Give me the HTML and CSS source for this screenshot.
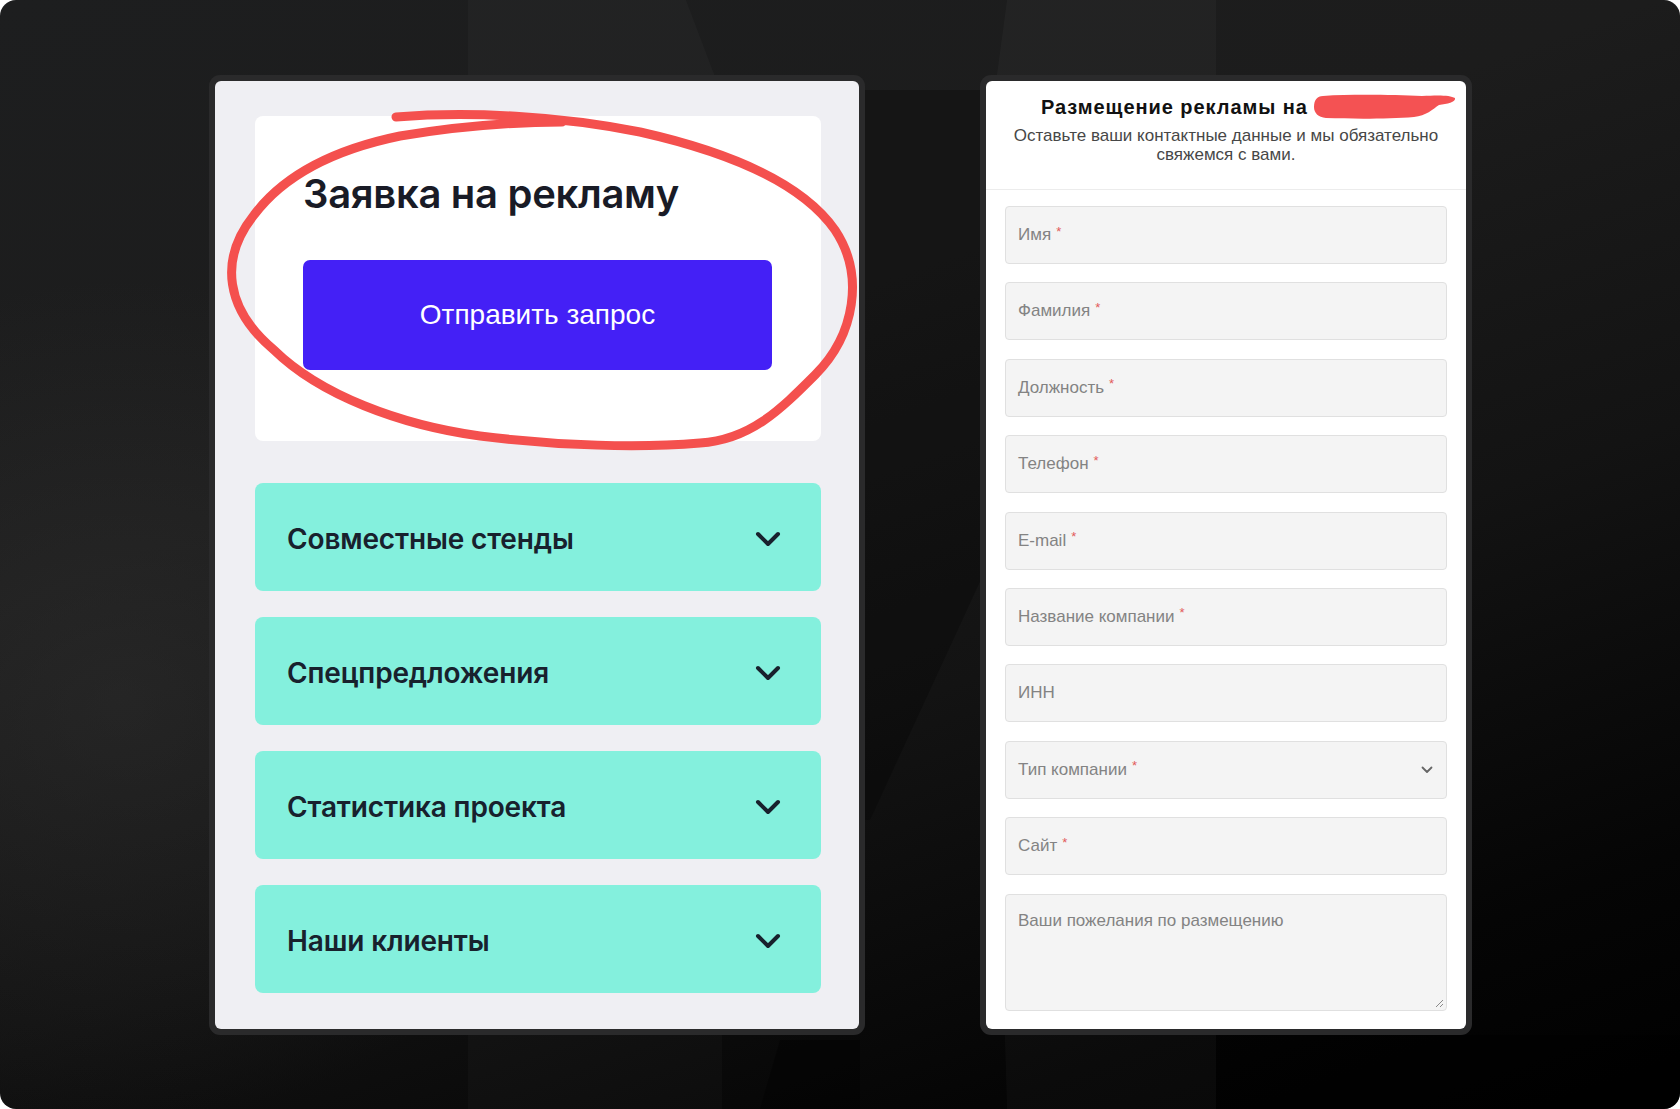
FILE: index.html
```html
<!DOCTYPE html>
<html lang="ru">
<head>
<meta charset="utf-8">
<title>Заявка на рекламу</title>
<link rel="stylesheet" href="styles.css">
</head>
<body>
<div class="screen">
  <svg class="bg-deco" width="1680" height="1109" viewBox="0 0 1680 1109" aria-hidden="true">
    <polygon points="468,0 686,0 722,95 722,1109 468,1109" fill="rgba(255,255,255,0.022)"/>
    <polygon points="1007,0 1216,0 1216,1109 1007,1109 980,200" fill="rgba(255,255,255,0.028)"/>
    <polygon points="860,90 990,90 990,560 870,820 860,820" fill="rgba(0,0,0,0.25)"/>
    <polygon points="780,1040 860,1040 860,1109 760,1109" fill="rgba(0,0,0,0.35)"/>
    <rect x="1216" y="1035" width="464" height="74" fill="rgba(0,0,0,0.4)"/>
  </svg>

  <div class="stage">
    <div class="frame">
      <div class="panel-left">
        <div class="cta-card">
          <h1 class="cta-title">Заявка на рекламу</h1>
          <button class="cta-btn" type="button">Отправить запрос</button>
        </div>
        <div class="acc-list">
          <div class="acc">
            <span class="acc-label">Совместные стенды</span>
            <svg class="acc-chev" width="26" height="16" viewBox="0 0 26 16"><path d="M3 3 L13 13 L23 3"/></svg>
          </div>
          <div class="acc">
            <span class="acc-label">Спецпредложения</span>
            <svg class="acc-chev" width="26" height="16" viewBox="0 0 26 16"><path d="M3 3 L13 13 L23 3"/></svg>
          </div>
          <div class="acc">
            <span class="acc-label">Статистика проекта</span>
            <svg class="acc-chev" width="26" height="16" viewBox="0 0 26 16"><path d="M3 3 L13 13 L23 3"/></svg>
          </div>
          <div class="acc">
            <span class="acc-label">Наши клиенты</span>
            <svg class="acc-chev" width="26" height="16" viewBox="0 0 26 16"><path d="M3 3 L13 13 L23 3"/></svg>
          </div>
        </div>
      </div>
    </div>

    <div class="frame">
      <div class="panel-right">
        <div class="form-head">
          <div class="form-title">Размещение рекламы на <span class="redact"><svg width="142" height="26" viewBox="0 0 142 26"><path d="M9 2 C40 0 80 1 108 2 C124 1 136 1 141 4 C142 8 133 10 125 11 C119 15 112 22 100 23 C75 25 40 25 12 24 C4 23 0 19 0 13 C0 6 3 2 9 2 Z" fill="#f45253"/></svg></span></div>
          <p class="form-sub">Оставьте ваши контактные данные и мы обязательно свяжемся с вами.</p>
        </div>
        <div class="form-body">
          <div class="field"><span class="ph">Имя</span><span class="req">*</span></div>
          <div class="field"><span class="ph">Фамилия</span><span class="req">*</span></div>
          <div class="field"><span class="ph">Должность</span><span class="req">*</span></div>
          <div class="field"><span class="ph">Телефон</span><span class="req">*</span></div>
          <div class="field"><span class="ph">E-mail</span><span class="req">*</span></div>
          <div class="field"><span class="ph">Название компании</span><span class="req">*</span></div>
          <div class="field"><span class="ph">ИНН</span></div>
          <div class="field field-select"><span class="ph">Тип компании</span><span class="req">*</span>
            <svg class="sel-chev" width="12" height="8" viewBox="0 0 12 8"><path d="M1.5 1.5 L6 6 L10.5 1.5"/></svg>
          </div>
          <div class="field"><span class="ph">Сайт</span><span class="req">*</span></div>
          <div class="field field-area"><span class="ph">Ваши пожелания по размещению</span>
            <svg class="grip" width="10" height="10" viewBox="0 0 10 10"><path d="M9 2 L2 9 M9 6 L6 9"/></svg>
          </div>
        </div>
      </div>
    </div>
  </div>

  <svg class="scribble" width="1680" height="1109" viewBox="0 0 1680 1109" aria-hidden="true">
    <path d="M396 117 C470 111 560 116 640 132 C720 150 800 180 835 230 C865 275 855 335 815 375 C780 410 750 440 700 443 C640 448 560 446 480 436 C400 425 320 395 274 350 C226 310 218 260 254 215 C284 175 332 150 400 136 C460 126 520 122 562 122"/>
  </svg>
</div>
</body>
</html>
```

FILE: styles.css
```css
* { box-sizing: border-box; }

html, body {
  margin: 0;
  padding: 0;
  background: #ffffff;
}

.screen {
  position: relative;
  width: 1680px;
  height: 1109px;
  border-radius: 16px;
  overflow: hidden;
  background:
    radial-gradient(ellipse 700px 600px at 120px 700px, rgba(60,60,60,0.35), rgba(0,0,0,0) 70%),
    linear-gradient(160deg, #1d1e1f 0%, #1c1c1c 35%, #131313 60%, #050505 85%, #000000 100%);
}

.bg-deco {
  position: absolute;
  left: 0;
  top: 0;
}

.stage {
  position: relative;
  z-index: 1;
  display: flex;
  align-items: flex-start;
  gap: 115px;
  padding: 75px 0 0 209px;
}

.frame {
  padding: 6px;
  background: #2a2a2b;
  border-radius: 11px;
}

/* ---------- left panel ---------- */
.panel-left {
  width: 644px;
  height: 948px;
  background: #efeff3;
  border-radius: 6px;
  padding: 35px 38px 0 40px;
}

.cta-card {
  height: 325px;
  background: #ffffff;
  border-radius: 8px;
  padding: 54px 0 0 48px;
}

.cta-title {
  margin: 0;
  font-family: "Inter", "Noto Sans", sans-serif;
  font-weight: 600;
  font-size: 40px;
  line-height: 48px;
  letter-spacing: -0.3px;
  color: #191b26;
}

.cta-btn {
  display: block;
  margin-top: 42px;
  width: 469px;
  height: 110px;
  border: none;
  border-radius: 7px;
  background: #4420f6;
  color: #ffffff;
  font-family: "Liberation Sans", Arial, sans-serif;
  font-size: 28px;
  font-weight: 400;
}

.acc-list {
  margin-top: 42px;
  display: flex;
  flex-direction: column;
  gap: 26px;
}

.acc {
  height: 108px;
  background: #84f0dd;
  border-radius: 8px;
  display: flex;
  align-items: center;
  justify-content: space-between;
  padding: 4px 40px 0 32px;
}

.acc-label {
  font-family: "Inter", "Noto Sans", sans-serif;
  font-weight: 600;
  font-size: 28px;
  color: #18212d;
  letter-spacing: -0.15px;
}

.acc-chev path {
  fill: none;
  stroke: #18212d;
  stroke-width: 4;
  stroke-linecap: round;
  stroke-linejoin: round;
}

/* ---------- right panel ---------- */
.panel-right {
  width: 480px;
  height: 948px;
  background: #ffffff;
  border-radius: 6px;
  font-family: "Liberation Sans", Arial, sans-serif;
}

.form-head {
  height: 109px;
  border-bottom: 1px solid #ececec;
  padding: 13px 18px 0;
}

.form-title {
  padding-left: 37px;
  font-weight: 700;
  font-size: 20px;
  line-height: 24px;
  letter-spacing: 0.95px;
  color: #111111;
  white-space: nowrap;
}

.redact {
  display: inline-block;
  vertical-align: -6px;
  width: 142px;
  height: 26px;
  margin-left: 0;
  letter-spacing: 0;
}

.redact svg {
  display: block;
}

.form-sub {
  margin: 6px 0 0;
  text-align: center;
  font-size: 17px;
  line-height: 19px;
  color: #474747;
}

.form-body {
  padding: 16px 19px 0;
  display: flex;
  flex-direction: column;
  gap: 18.4px;
}

.field {
  position: relative;
  height: 58px;
  background: #f4f4f4;
  border: 1px solid #e0e0e0;
  border-radius: 4px;
  display: flex;
  align-items: center;
  padding-left: 12px;
  font-size: 17px;
  color: #838383;
}

.req {
  color: #e25a5a;
  font-size: 13px;
  margin-left: 5px;
  position: relative;
  top: -4px;
}

.field-select .sel-chev {
  position: absolute;
  right: 13px;
  top: 24px;
}

.sel-chev path {
  fill: none;
  stroke: #666666;
  stroke-width: 1.8;
  stroke-linecap: round;
  stroke-linejoin: round;
}

.field-area {
  height: 117px;
  align-items: flex-start;
  padding-top: 16px;
}

.grip {
  position: absolute;
  right: 2px;
  bottom: 2px;
}

.grip path {
  fill: none;
  stroke: #8a8a8a;
  stroke-width: 1;
}

/* ---------- hand-drawn marker ---------- */
.scribble {
  position: absolute;
  left: 0;
  top: 0;
  z-index: 2;
  pointer-events: none;
}

.scribble path {
  fill: none;
  stroke: #f4504e;
  stroke-width: 9;
  stroke-linecap: round;
  stroke-linejoin: round;
}
```
